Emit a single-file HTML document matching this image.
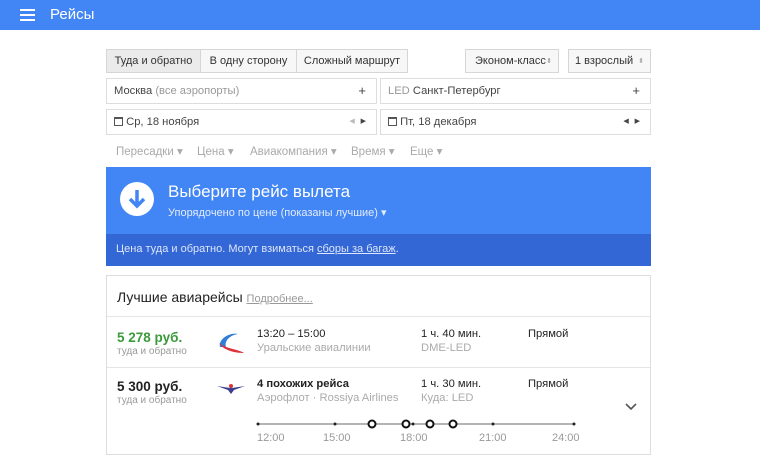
<!DOCTYPE html><html><head><meta charset="utf-8"><style>
*{box-sizing:border-box;margin:0;padding:0}
body{width:760px;height:450px;overflow:hidden;background:#fff;font-family:"Liberation Sans",Arial,sans-serif;color:#222;position:relative;font-size:12px}
.a{position:absolute}
.hd{left:0;top:0;width:760px;height:30px;background:#4285f4}
.box{border:1px solid #ddd;background:#fff}
.btn{border:1px solid #d6d6d6;background:#f7f7f7;font-size:11px;display:flex;align-items:center;justify-content:center;color:#333}
.g{color:#999}
.t{font-size:11.2px}
.f{position:absolute;top:144px;font-size:11.5px;color:#aaa}
</style></head><body>
<div class="a hd"></div>
<div class="a" style="left:20px;top:9px;width:15px;height:2px;background:#fff;box-shadow:0 5px 0 #fff,0 10px 0 #fff"></div>
<div class="a" style="left:50px;top:6px;color:#fff;font-size:15px">Рейсы</div>

<div class="a btn" style="left:106px;top:49px;width:95px;height:24px;background:#ebebeb">Туда и обратно</div>
<div class="a btn" style="left:200px;top:49px;width:97px;height:24px">В одну сторону</div>
<div class="a btn" style="left:296px;top:49px;width:112px;height:24px">Сложный маршрут</div>
<div class="a btn" style="left:465px;top:49px;width:94px;height:24px;justify-content:flex-start;padding-left:9px">Эконом-класс<span class="a" style="right:6px;font-size:7px;color:#aaa">⬍</span></div>
<div class="a btn" style="left:568px;top:49px;width:83px;height:24px;justify-content:flex-start;padding-left:6px">1 взрослый<span class="a" style="right:6px;font-size:7px;color:#aaa">⬍</span></div>

<div class="a box t" style="left:106px;top:78px;width:271px;height:26px;padding:6px 7px;color:#444">Москва <span class="g">(все аэропорты)</span><span class="a" style="right:10px;top:4px;font-size:13px">+</span></div>
<div class="a box t" style="left:380px;top:78px;width:271px;height:26px;padding:6px 7px;color:#444"><span class="g">LED</span> Санкт-Петербург<span class="a" style="right:10px;top:4px;font-size:13px">+</span></div>
<div class="a box t" style="left:106px;top:109px;width:271px;height:26px;padding:6px 7px;color:#444"><span style="display:inline-block;width:9px;height:9px;border:1px solid #555;border-top-width:2px;vertical-align:-1px"></span> Ср, 18 ноября<span class="a" style="right:10px;top:7px;font-size:7px"><span style="color:#bbb">◀</span>&nbsp;&nbsp;&nbsp;▶</span></div>
<div class="a box t" style="left:380px;top:109px;width:271px;height:26px;padding:6px 7px;color:#444"><span style="display:inline-block;width:9px;height:9px;border:1px solid #555;border-top-width:2px;vertical-align:-1px"></span> Пт, 18 декабря<span class="a" style="right:10px;top:7px;font-size:7px">◀&nbsp;&nbsp;&nbsp;▶</span></div>

<div class="f" style="left:116px">Пересадки ▾</div>
<div class="f" style="left:197px">Цена ▾</div>
<div class="f" style="left:250px">Авиакомпания ▾</div>
<div class="f" style="left:351px">Время ▾</div>
<div class="f" style="left:410px">Еще ▾</div>

<div class="a" style="left:106px;top:167px;width:545px;height:67px;background:#4285f4"></div>
<div class="a" style="left:106px;top:234px;width:545px;height:32px;background:#3367d6"></div>
<div class="a" style="left:120px;top:182px;width:34px;height:34px;border-radius:50%;background:#fff"></div>
<svg class="a" style="left:120px;top:182px" width="34" height="34"><path d="M17 8v16M10 17l7 7 7-7" stroke="#4285f4" stroke-width="3.5" fill="none"/></svg>
<div class="a" style="left:168px;top:182px;color:#fff;font-size:17px">Выберите рейс вылета</div>
<div class="a" style="left:168px;top:206px;color:#e3ecfd;font-size:11px">Упорядочено по цене (показаны лучшие) ▾</div>
<div class="a" style="left:116px;top:243px;color:#dde6fb;font-size:11px">Цена туда и обратно. Могут взиматься <u>сборы за багаж</u>.</div>

<div class="a box" style="left:106px;top:275px;width:545px;height:180px"></div>
<div class="a" style="left:117px;top:289px;font-size:14px">Лучшие авиарейсы <span style="font-size:11px;color:#999;text-decoration:underline">Подробнее...</span></div>
<div class="a" style="left:107px;top:316px;width:543px;height:1px;background:#e5e5e5"></div>
<div class="a" style="left:107px;top:367px;width:543px;height:1px;background:#e5e5e5"></div>

<div class="a" style="left:117px;top:330px;font-size:13.5px;font-weight:bold;color:#3b9b3b">5 278 руб.</div>
<div class="a g" style="left:117px;top:346px;font-size:10px">туда и обратно</div>
<svg class="a" style="left:216px;top:329px" width="30" height="28"><path d="M4 18C2 10 14 3 22 5 14 6 8 12 10 18Z" fill="#2f7ed8"/><path d="M3 14C10 20 22 20 28 24 20 24 8 22 3 14Z" fill="#e0303a"/></svg>
<div class="a t" style="left:257px;top:328px">13:20 – 15:00</div>
<div class="a t" style="left:257px;top:342px;color:#aaa">Уральские авиалинии</div>
<div class="a t" style="left:421px;top:328px">1 ч. 40 мин.</div>
<div class="a t" style="left:421px;top:342px;color:#aaa">DME-LED</div>
<div class="a t" style="left:528px;top:328px">Прямой</div>

<div class="a" style="left:117px;top:379px;font-size:13.5px;font-weight:bold">5 300 руб.</div>
<div class="a g" style="left:117px;top:395px;font-size:10px">туда и обратно</div>
<svg class="a" style="left:216px;top:380px" width="30" height="16"><path d="M1 6L14 8 15 4 16 8 29 6 18 10 15 14 12 10Z" fill="#3a3f8f"/><circle cx="15" cy="6" r="2" fill="#d33"/></svg>
<div class="a t" style="left:257px;top:378px;font-weight:bold">4 похожих рейса</div>
<div class="a t" style="left:257px;top:392px;color:#aaa">Аэрофлот · Rossiya Airlines</div>
<div class="a t" style="left:421px;top:378px">1 ч. 30 мин.</div>
<div class="a t" style="left:421px;top:392px;color:#aaa">Куда: LED</div>
<div class="a t" style="left:528px;top:378px">Прямой</div>
<svg class="a" style="left:624px;top:402px" width="14" height="10"><path d="M2 2l5 5 5-5" stroke="#555" stroke-width="1.6" fill="none"/></svg>

<svg class="a" style="left:250px;top:414px" width="340" height="20"><line x1="8" y1="10" x2="324" y2="10" stroke="#888" stroke-width="1.3"/><g fill="#222"><circle cx="8" cy="10" r="1.5"/><circle cx="85" cy="10" r="1.5"/><circle cx="243" cy="10" r="1.5"/><circle cx="324" cy="10" r="1.5"/><circle cx="163" cy="10" r="1.5"/></g><g fill="#fff" stroke="#111" stroke-width="2"><circle cx="122" cy="10" r="3.5"/><circle cx="156" cy="10" r="3.5"/><circle cx="180" cy="10" r="3.5"/><circle cx="203" cy="10" r="3.5"/></g></svg>
<div class="a g" style="top:432px;left:257px;font-size:11px;color:#999">12:00</div>
<div class="a g" style="top:432px;left:323px;font-size:11px;color:#999">15:00</div>
<div class="a g" style="top:432px;left:400px;font-size:11px;color:#999">18:00</div>
<div class="a g" style="top:432px;left:479px;font-size:11px;color:#999">21:00</div>
<div class="a g" style="top:432px;left:552px;font-size:11px;color:#999">24:00</div>
</body></html>
